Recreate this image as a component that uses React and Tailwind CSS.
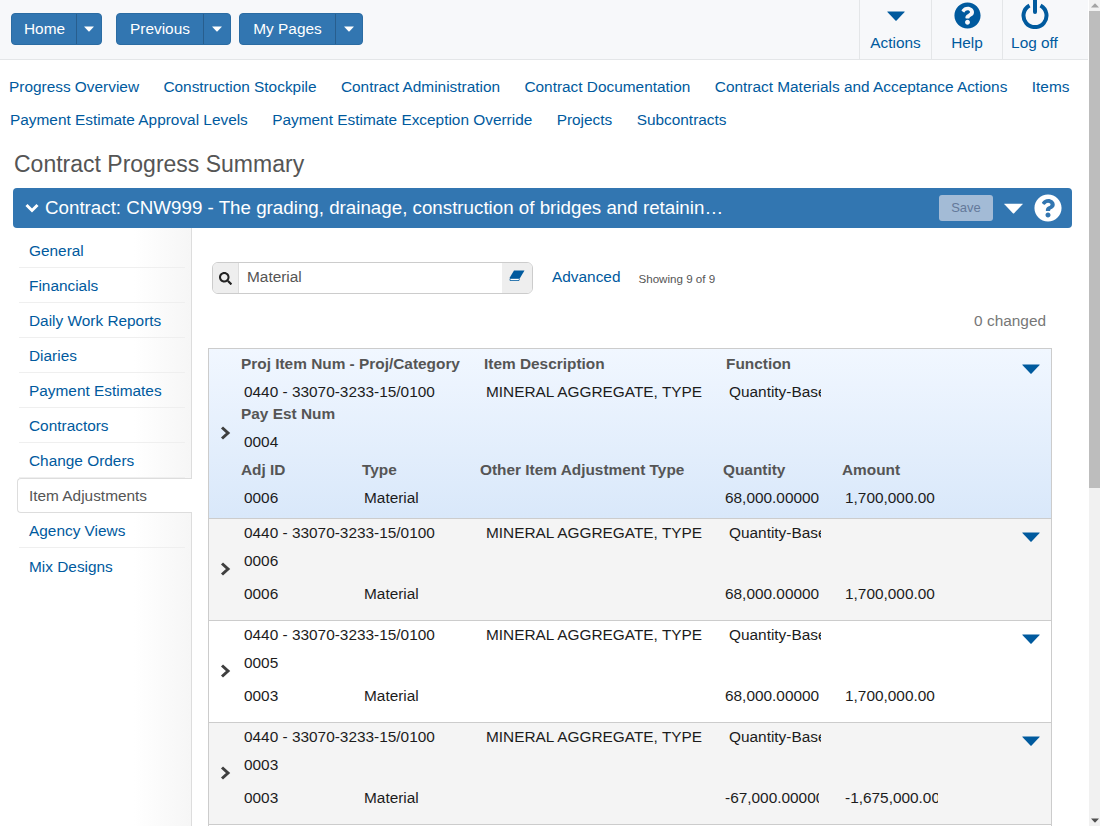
import React from "react";
import {FaSearch, FaQuestionCircle} from "react-icons/fa";

const topLinks = [
    ["Progress Overview", "Construction Stockpile", "Contract Administration", "Contract Documentation", "Contract Materials and Acceptance Actions", "Items"],
    ["Payment Estimate Approval Levels", "Payment Estimate Exception Override", "Projects", "Subcontracts"],
];

const tabs = ["General", "Financials", "Daily Work Reports", "Diaries", "Payment Estimates", "Contractors", "Change Orders", "Item Adjustments", "Agency Views", "Mix Designs"];

const rows = [
    {payEst: "0004", adjId: "0006", qty: "68,000.00000", amount: "1,700,000.00", header: true},
    {payEst: "0006", adjId: "0006", qty: "68,000.00000", amount: "1,700,000.00", bg: "bg-[#f4f4f4]"},
    {payEst: "0005", adjId: "0003", qty: "68,000.00000", amount: "1,700,000.00", bg: "bg-white"},
    {payEst: "0003", adjId: "0003", qty: "-67,000.00000", amount: "-1,675,000.00", bg: "bg-[#f4f4f4]"},
];

function Caret({className}) {
    return (
        <svg viewBox="0 0 18 10" className={className} fill="currentColor">
            <path d="M0.6 0.4 H17.4 Q18 0.4 17.6 1 L9.6 9.4 Q9 10 8.4 9.4 L0.4 1 Q0 0.4 0.6 0.4 Z" />
        </svg>
    );
}

function SplitButton({label, width, labelWidth}) {
    return (
        <div className={`flex h-[32px] rounded-[4px] border border-[#2b6ca3] bg-[#3276b1] text-white ${width}`}>
            <div className={`flex items-center justify-center ${labelWidth}`}>{label}</div>
            <div className="flex flex-1 items-center justify-center border-l border-[#285e8e]">
                <Caret className="w-[10px] h-[6px]" />
            </div>
        </div>
    );
}

function HeaderAction({label, width, children}) {
    return (
        <div className={`flex h-full flex-col items-center border-l border-[#e4e6e8] text-[#005a9e] ${width}`}>
            <div className="flex h-[31px] w-full items-center justify-center">{children}</div>
            <div className="leading-[24px]">{label}</div>
        </div>
    );
}

function Label({className, children}) {
    return <div className={`whitespace-nowrap font-bold text-[#555] ${className}`}>{children}</div>;
}

function Value({className, children}) {
    return <div className={`overflow-hidden whitespace-nowrap text-[#1c1c1c] ${className}`}>{children}</div>;
}

function ItemRow({row}) {
    const {header} = row;
    return (
        <div className={`flex border-x border-t border-[#cccccc] ${header ? "h-[170px] bg-gradient-to-b from-[#f1f7ff] to-[#d9e8fa]" : `h-[102px] ${row.bg}`}`}>
            <div className="flex w-[32px] items-center justify-center pl-[1px] pb-[2px] text-[#3f3f3f]">
                <svg viewBox="0 0 11 14" className="w-[11px] h-[14px]" fill="none" stroke="currentColor" strokeWidth="3">
                    <path d="M2 1.5 L8 7 L2 12.5" />
                </svg>
            </div>
            <div className={`flex-1 ${header ? "pt-[1px]" : ""}`}>
                {header && (
                    <div className="flex h-[28px] leading-[28px]">
                        <Label className="w-[243px]">Proj Item Num - Proj/Category</Label>
                        <Label className="w-[242px]">Item Description</Label>
                        <Label>Function</Label>
                    </div>
                )}
                <div className="flex h-[28px] leading-[28px]">
                    <Value className="w-[243px] pl-[3px]">0440 - 33070-3233-15/0100</Value>
                    <Value className="w-[242px] pl-[2px]">MINERAL AGGREGATE, TYPE</Value>
                    <Value className="w-[95px] pl-[3px]">Quantity-Based</Value>
                </div>
                {header && <Label className="h-[16px] leading-[16px] mb-[6px]">Pay Est Num</Label>}
                <Value className="h-[28px] leading-[28px] pl-[3px]">{row.payEst}</Value>
                {header ? (
                    <div className="flex h-[28px] leading-[28px]">
                        <Label className="w-[121px]">Adj ID</Label>
                        <Label className="w-[118px]">Type</Label>
                        <Label className="w-[243px]">Other Item Adjustment Type</Label>
                        <Label className="w-[119px]">Quantity</Label>
                        <Label>Amount</Label>
                    </div>
                ) : (
                    <div className="h-[5px]" />
                )}
                <div className="flex h-[28px] leading-[28px]">
                    <Value className="w-[121px] pl-[3px]">{row.adjId}</Value>
                    <Value className="w-[361px] pl-[2px]">Material</Value>
                    <div className="w-[119px]">
                        <Value className="w-[96px] pl-[2px]">{row.qty}</Value>
                    </div>
                    <Value className="w-[96px] pl-[3px]">{row.amount}</Value>
                </div>
            </div>
            <div className={`w-[29px] text-[#005a9e] ${header ? "pt-[15px]" : "pt-[13px]"}`}>
                <Caret className="w-[18px] h-[10px]" />
            </div>
        </div>
    );
}

export default function App() {
    return (
        <div className="flex h-[826px] w-[1100px] overflow-hidden bg-white text-[15.4px] [font-family:Liberation_Sans,Arial,sans-serif]">
            <div className="w-[1088px] shrink-0">
                <header className="flex h-[60px] items-center justify-between border-b border-[#e4e6e8] bg-[#f7f8fa]">
                    <div className="flex gap-[14px] pl-[11px] pb-[2px]">
                        <SplitButton label="Home" width="w-[91px]" labelWidth="w-[64px] pl-[1px]" />
                        <div className="flex gap-[8px]">
                            <SplitButton label="Previous" width="w-[115px]" labelWidth="w-[86px]" />
                            <SplitButton label="My Pages" width="w-[124px]" labelWidth="w-[95px]" />
                        </div>
                    </div>
                    <div className="flex h-full">
                        <HeaderAction label="Actions" width="w-[72px]">
                            <Caret className="w-[18px] h-[10px]" />
                        </HeaderAction>
                        <HeaderAction label="Help" width="w-[71px]">
                            <FaQuestionCircle className="w-[27px] h-[27px]" />
                        </HeaderAction>
                        <HeaderAction label="Log off" width="w-[86px] pr-[22px]">
                            <svg viewBox="0 0 28 30" className="-mt-[4px] w-[28px] h-[30px]" fill="none" stroke="currentColor" strokeWidth="4">
                                <path d="M8.5 6.5 A11.5 11.5 0 1 0 19.5 6.5" />
                                <path d="M14 0 V13" strokeLinecap="round" />
                            </svg>
                        </HeaderAction>
                    </div>
                </header>

                <nav className="pt-[10px] text-[#005a9e]">
                    <div className="flex h-[33px] items-center gap-[24.4px] pl-[9px] whitespace-nowrap">
                        {topLinks[0].map((link) => <span key={link}>{link}</span>)}
                    </div>
                    <div className="flex h-[33px] items-center gap-[24.4px] pl-[10px] whitespace-nowrap">
                        {topLinks[1].map((link) => <span key={link}>{link}</span>)}
                    </div>
                </nav>

                <h1 className="h-[52px] pl-[14px] pt-[4px] text-[23px] leading-[48px] text-[#555]">Contract Progress Summary</h1>

                <div className="mx-[13px] flex h-[40px] w-[1059px] items-center justify-between rounded-[4px] bg-[#3276b1] text-white">
                    <div className="flex items-center gap-[6px] pl-[12px] text-[18.75px]">
                        <svg viewBox="0 0 14 10" className="w-[14px] h-[10px]" fill="none" stroke="currentColor" strokeWidth="3">
                            <path d="M1.5 2 L7 7.5 L12.5 2" />
                        </svg>
                        <span className="whitespace-nowrap">Contract: CNW999 - The grading, drainage, construction of bridges and retainin…</span>
                    </div>
                    <div className="flex items-center pr-[10px]">
                        <div className="flex h-[26px] w-[54px] items-center justify-center rounded-[3px] bg-[#a3bbd6] text-[13px] text-[#64799a]">Save</div>
                        <Caret className="ml-[11px] w-[19px] h-[11px]" />
                        <FaQuestionCircle className="ml-[11px] w-[28px] h-[28px]" />
                    </div>
                </div>

                <div className="flex">
                    <aside className="h-[598px] w-[192px] shrink-0 border-r border-[#dddddd] bg-gradient-to-r from-white from-70% to-[#f6f6f6] pt-[5px]">
                        {tabs.map((tab) => tab === "Item Adjustments" ? (
                            <div key={tab} className="relative z-10 -mr-px ml-[17px] flex h-[35px] items-center rounded-l-[4px] border border-r-0 border-[#dddddd] bg-white pl-[11px] pt-[1px] text-[#555]">
                                {tab}
                            </div>
                        ) : (
                            <div key={tab} className="ml-[19px] mr-[6px] flex h-[35px] items-center border-b border-[#efefef] pl-[10px] pt-[2px] text-[#005a9e] last:border-b-0">
                                {tab}
                            </div>
                        ))}
                    </aside>

                    <main className="flex-1 pl-[16px] pr-[36px]">
                        <div className="mt-[34px] flex h-[32px] items-center pl-[4px]">
                            <div className="flex h-full w-[321px] overflow-hidden rounded-[6px] border border-[#cccccc]">
                                <div className="flex w-[26px] items-center justify-center border-r border-[#dddddd] bg-[#eeeeee] text-[#222]">
                                    <FaSearch className="w-[13px] h-[13px]" />
                                </div>
                                <div className="flex flex-1 items-center pl-[8px] pb-[2px] text-[#555]">Material</div>
                                <div className="flex w-[30px] items-start justify-center bg-[#eeeeee] pt-[7px] text-[#005a9e]">
                                    <svg viewBox="0 0 16 12" className="w-[16px] h-[12px]">
                                        <path d="M5 0.5 H15.5 L11 8 H0.5 Z" fill="currentColor" />
                                        <path d="M1 8.5 H10.5 L10 10.5 H1 Z" fill="#ffffff" stroke="currentColor" strokeWidth="0.8" />
                                    </svg>
                                </div>
                            </div>
                            <span className="ml-[19px] pb-[3px] text-[#005a9e]">Advanced</span>
                            <span className="ml-[18px] mt-[2px] text-[11.6px] text-[#555]">Showing 9 of 9</span>
                        </div>
                        <div className="mt-[15px] h-[24px] pr-[6px] text-right leading-[24px] text-[#777]">0 changed</div>
                        <div className="mt-[15px]">
                            {rows.map((row, i) => <ItemRow key={i} row={row} />)}
                            <div className="h-[20px] border-x border-t border-[#cccccc] bg-white" />
                        </div>
                    </main>
                </div>
            </div>

            <div className="ml-[1px] flex h-full w-[11px] flex-col items-center bg-[#f1f1f1]">
                <div className="flex h-[11px] items-center justify-center text-[#a3a3a3]">
                    <Caret className="w-[8px] h-[5px] rotate-180" />
                </div>
                <div className="h-[477px] w-full bg-[#bdbdbd]" />
                <div className="flex-1" />
                <div className="flex h-[11px] items-center justify-center text-[#505050]">
                    <Caret className="w-[8px] h-[5px]" />
                </div>
            </div>
        </div>
    );
}
